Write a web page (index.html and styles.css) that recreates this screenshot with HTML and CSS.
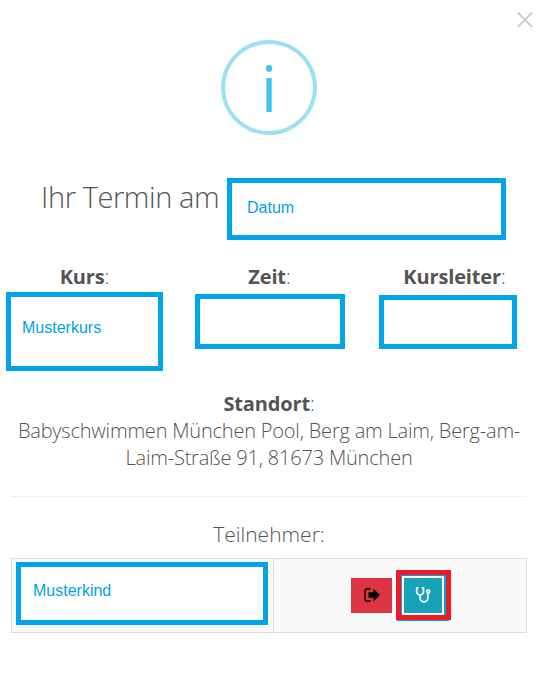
FILE: index.html
```html
<!DOCTYPE html>
<html lang="de">
<head>
  <meta charset="UTF-8">
  <title>Termin</title>
  <link rel="stylesheet" href="styles.css">
</head>
<body>
  <div class="modal">
    <button type="button" class="close" aria-label="Schließen">
      <svg width="16" height="16" viewBox="0 0 16 16"><path d="M.8.500l14.400 14.400M15.200.500L.8 14.900"/></svg>
    </button>
    <div class="info-icon">i</div>

    <h2 class="title">
      <span>Ihr Termin am</span>
      <span class="field field-date">Datum</span>
    </h2>

    <div class="details">
      <div class="detail">
        <div><b>Kurs</b>:</div>
        <div class="field field-course">Musterkurs</div>
      </div>
      <div class="detail">
        <div><b>Zeit</b>:</div>
        <div class="field field-time"></div>
      </div>
      <div class="detail">
        <div><b>Kursleiter</b>:</div>
        <div class="field field-leader"></div>
      </div>
    </div>

    <div class="location">
      <b>Standort</b>:<br>
      Babyschwimmen München Pool, Berg am Laim, Berg-am-<br>Laim-Straße 91, 81673 München
    </div>

    <hr>

    <div class="members-title">Teilnehmer:</div>
    <div class="members">
      <div class="member-name">
        <div class="field field-child">Musterkind</div>
      </div>
      <div class="member-actions">
        <button type="button" class="btn btn-danger" aria-label="Abmelden">
          <svg width="16" height="14" viewBox="0 0 16 14">
            <path class="door" d="M6.5 1H3Q1 1 1 3v8q0 2 2 2h3.500"/>
            <path d="M4.500 4.300h5V.800L16 7 9.500 13.200V9.700h-5z"/>
          </svg>
        </button>
        <div class="marker">
          <button type="button" class="btn btn-info" aria-label="Attest">
            <svg width="16" height="17" viewBox="0 0 16 17">
              <path d="M3.500 1.800H1.700v3.700a3.400 3.400 0 0 0 6.800 0V1.800H6.700M5.100 9v3a3.900 3.900 0 0 0 7.800 0V7"/>
              <circle cx="13.200" cy="5.500" r="1.500"/>
            </svg>
          </button>
        </div>
      </div>
    </div>
  </div>
</body>
</html>
```
FILE: styles.css
```css
* {
  box-sizing: border-box;
}
body {
  margin: 0;
  background: #fff;
  color: #545454;
  font-family: 'Open Sans', sans-serif;
  font-size: 20px;
  font-weight: 300;
  line-height: 27px;
  overflow: hidden;
}
b {
  font-weight: 700;
  letter-spacing: -0.15px;
}
.modal {
  position: relative;
  height: 674px;
  padding: 40px 14px 0 11px;
}
.close {
  position: absolute;
  top: 12px;
  right: 8px;
  padding: 0;
  border: 0;
  background: none;
  line-height: 0;
}
.close path {
  stroke: #ccc;
  stroke-width: 2;
}
.info-icon {
  width: 96px;
  height: 95px;
  margin: 0 auto;
  border: 4px solid #9de0f6;
  border-radius: 50%;
  color: #3fc3ee;
  font-size: 64px;
  font-weight: 400;
  line-height: 88px;
  text-align: center;
}
.title {
  display: flex;
  align-items: flex-start;
  justify-content: space-between;
  margin: 43px 21px 0 30px;
  font-size: 29px;
  font-weight: 300;
  line-height: 37px;
  letter-spacing: -0.4px;
  white-space: nowrap;
}
.field {
  flex-shrink: 0;
  border: 5px solid #00a2e8;
  background: #fff;
  color: #00a2e8;
  font: 16px/20px 'Liberation Sans', Arial, sans-serif;
  letter-spacing: 0;
  text-align: left;
}
.field-date {
  width: 279px;
  height: 62px;
  padding: 15px;
}
.details {
  display: grid;
  grid-template-columns: repeat(3, 185px);
  height: 108px;
  margin: 23px -19px 0;
  text-align: center;
}
.detail {
  display: flex;
  flex-direction: column;
  align-items: center;
}
.field-course {
  width: 157px;
  height: 79px;
  margin-top: 2px;
  padding: 21px 11px;
}
.field-time {
  width: 150px;
  height: 55px;
  margin: 4px 0 0 1px;
}
.field-leader {
  width: 138px;
  height: 54px;
  margin: 5px 13px 0 0;
}
.location {
  margin-top: 19px;
  letter-spacing: -0.2px;
  text-align: center;
  white-space: nowrap;
}
hr {
  margin: 25px 0 24px;
  border: 0;
  border-top: 1px solid #eee;
}
.members-title {
  font-size: 21px;
  text-align: center;
}
.members {
  display: grid;
  grid-template-columns: 262px 1fr;
  height: 75px;
  margin-top: 10px;
  border: 1px solid #ddd;
  background: #f9f9f9;
}
.member-name {
  padding: 3px 4px;
  border-right: 1px solid #ddd;
}
.field-child {
  width: 252px;
  height: 63px;
  padding: 14px 12px;
}
.member-actions {
  display: flex;
  align-items: flex-start;
  justify-content: center;
  gap: 4px;
  padding: 11px 0 0 2px;
}
.btn {
  display: flex;
  align-items: center;
  justify-content: center;
  height: 35px;
  padding: 0 0 2px;
  border: 0;
}
.btn-danger {
  width: 41px;
  margin-top: 8px;
  background: #dc3545;
}
.btn-danger .door {
  fill: none;
  stroke: #000;
  stroke-width: 1.300;
}
.btn-info {
  width: 38px;
  background: #17a2b8;
  box-shadow: 0 0 0 2px #fff;
}
.btn-info svg {
  fill: none;
  stroke: #fff;
  stroke-width: 1.700;
}
.marker {
  width: 55px;
  height: 50px;
  padding: 3px;
  border: 5px solid #ed1c24;
  background: #00a2e8;
  background-clip: padding-box;
}
.marker::after {
  content: "";
  display: block;
  width: 52px;
  height: 1px;
  margin: 7px 0 0 -7px;
  background: #00a2e8;
}
```
